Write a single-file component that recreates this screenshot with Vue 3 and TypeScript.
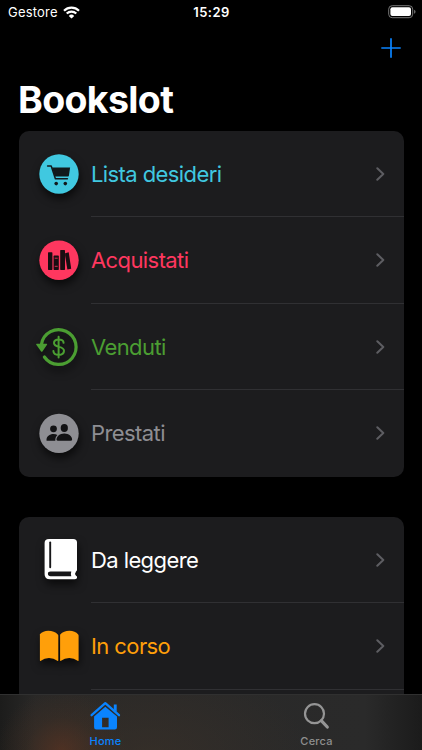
<script setup lang="ts">
interface Row {
  id: string
  label: string
  tone: string
  viewBox: string
}

const sections: Row[][] = [
  [
    { id: 'cart', label: 'Lista desideri', tone: 'cyan', viewBox: '0 -1 60 60' },
    { id: 'books', label: 'Acquistati', tone: 'pink', viewBox: '0 0 60 60' },
    { id: 'sold', label: 'Venduti', tone: 'green', viewBox: '0 -1 60 60' },
    { id: 'people', label: 'Prestati', tone: 'gray', viewBox: '0 -1 60 60' },
  ],
  [
    { id: 'book', label: 'Da leggere', tone: 'white', viewBox: '0 0 60 60' },
    { id: 'open', label: 'In corso', tone: 'orange', viewBox: '0 0 60 60' },
    { id: 'none', label: '', tone: 'white', viewBox: '0 0 60 60' },
  ],
]
</script>

<template>
  <div class="screen">
    <header class="status">
      <div class="carrier">
        <span class="carrier-name">Gestore</span>
        <svg class="wifi" viewBox="0 0 17 13">
          <path d="M1 4.7a10.8 10.8 0 0 1 15 0M3.7 7.5a7 7 0 0 1 9.6 0" fill="none" stroke="#fff" stroke-width="2.2" />
          <path d="M8.5 12.6 5.8 9.9a3.9 3.9 0 0 1 5.4 0z" fill="#fff" />
        </svg>
      </div>
      <span class="time">15:29</span>
      <svg class="battery" viewBox="0 0 28 14">
        <rect x=".7" y=".7" width="24" height="12" rx="3.5" fill="none" stroke="#777" />
        <rect x="2.4" y="2.3" width="20.6" height="8.8" rx="2" fill="#fff" />
        <path d="M26 4.8q1.6.6 1.6 2T26 8.8z" fill="#666" />
      </svg>
    </header>
    <div class="toolbar">
      <svg class="plus" viewBox="0 0 20 20"><path d="M10 .3v19.4M.3 10h19.4" stroke="#0a84ff" stroke-width="1.7" /></svg>
    </div>
    <h1 class="title">Bookslot</h1>
    <main class="content">
      <section v-for="(rows, s) in sections" :key="s" class="card">
        <div v-for="row in rows" :key="row.id" class="row" :class="row.tone">
          <svg class="icon" :viewBox="row.viewBox">
            <g v-if="row.id === 'cart'">
              <circle cx="29" cy="29" r="19.7" fill="currentColor" />
              <path d="M17.6 20.9h3.6l4.2 12.8h12" fill="none" stroke="#11191c" stroke-width="1.5" stroke-linecap="round" stroke-linejoin="round" />
              <path d="M22 22.6h18.1l-1.2 8.2q-.1.6-.8.6H24.8z" fill="#11191c" />
              <circle cx="26.2" cy="38.6" r="1.8" fill="#11191c" />
              <circle cx="35.3" cy="38.6" r="1.8" fill="#11191c" />
            </g>
            <g v-else-if="row.id === 'books'">
              <circle cx="29" cy="30.2" r="19.7" fill="currentColor" />
              <g fill="#180d11">
                <rect x="18" y="22.3" width="4.4" height="17.6" rx=".6" />
                <rect x="23.6" y="25.6" width="5.2" height="14.3" rx=".6" />
                <rect x="30.2" y="20" width="4.8" height="19.9" rx=".6" />
                <path d="m35.1 23.2 3.6-.9 2.5 16.5-3.8.7-2.3-14z" />
              </g>
              <path d="M24.7 28.2h3M24.7 36.3h3" stroke="currentColor" stroke-width=".8" />
            </g>
            <g v-else-if="row.id === 'sold'">
              <path d="M11.5 26.2a17.4 17.4 0 1 1 2.9 12.8" fill="none" stroke="currentColor" stroke-width="3.2" stroke-linecap="round" />
              <path d="M6.8 25.8h9.8q1 0 .4.9l-4.6 6.7q-.7.9-1.3 0l-4.8-6.7q-.6-.9.5-.9z" fill="currentColor" />
              <path d="M33.6 24.8q-.3-3.3-5-3.3-4.6 0-4.6 3.6c0 5.3 10 2.2 10 7.7 0 2.7-2.2 4.1-5.3 4.1q-5.1 0-5.3-3.9M28.6 18.8v20.7" fill="none" stroke="currentColor" stroke-width="2" stroke-linecap="round" />
            </g>
            <g v-else-if="row.id === 'people'">
              <circle cx="29" cy="29.4" r="19.7" fill="currentColor" />
              <g fill="#121214">
                <circle cx="23.5" cy="24.8" r="3.4" />
                <path d="M17 36.8q-.5 0-.5-.9c0-3.3 3-5.9 7-5.9q2.4 0 3.9 1c-1.6 1.5-2.1 3-2.1 5.8z" />
                <ellipse cx="34.3" cy="24" rx="3.6" ry="4.1" />
                <path d="M28 36.8q-1.5 0-1.5-1.2c0-3.2 3.4-6 7.8-6s7.8 2.8 7.8 6q0 1.2-1.5 1.2z" />
              </g>
            </g>
            <g v-else-if="row.id === 'book'">
              <path d="M19 9h24.2q3.8 0 3.8 3.6v27.2q0 1.2-1 1.8-1.7 2.2 0 4.1l1 .8q.6 2.8-2.4 2.8H20q-5.4 0-5.4-5V13q0-4 4.4-4z" fill="currentColor" />
              <path d="M20.2 12.4v24.9" stroke="#171719" stroke-width="1.9" stroke-linecap="round" />
              <path d="M20.6 41.5h20.7q-.8 2.2 0 4.7H20.6q-2.7 0-2.7-2.35t2.7-2.35z" fill="#171719" />
            </g>
            <g v-else-if="row.id === 'open'" fill="currentColor">
              <path d="M9.8 18.3q3.2-3.6 8.5-3.6 6 0 9.5 3.7.5.4.5 1.4v24.5q0 1.1-1 .5-3.5-2.8-8.3-2.8-4.7 0-8.1 2.8-1 .7-1-.5V19.7q0-.9-.1-1.4z" />
              <path d="M30.2 18.4q3.5-3.7 9.2-3.7t8.8 3.7q.4.5.4 1.3v24.6q0 1.1-1 .5-3.6-2.8-8.3-2.8-4.8 0-8.3 2.8-.9.6-.9-.5V19.7q0-.9.1-1.3z" />
            </g>
          </svg>
          <div class="row-body">
            <span class="label">{{ row.label }}</span>
            <svg v-if="row.label" class="chevron" viewBox="0 0 9 14"><path d="m1.3 1.2 6 5.8-6 5.8" fill="none" stroke="#5d5d62" stroke-width="2" stroke-linecap="round" stroke-linejoin="round" /></svg>
          </div>
        </div>
      </section>
    </main>
    <nav class="tabs">
      <div class="tab active">
        <svg class="tab-icon" viewBox="0 0 34 30">
          <path d="m2.6 14.2 13.7-12.1L30 14.2" fill="none" stroke="#0a84ff" stroke-width="2.3" stroke-linecap="round" stroke-linejoin="round" />
          <path d="M24.8 3.6h2.9v7.2l-2.9-2.4z" fill="#0a84ff" />
          <path d="M16.3 5.7 28 15.6v10.6q0 2.2-2.2 2.2H7.3q-2.2 0-2.2-2.2V15.6zM13.1 16.7v9.5h6.5v-9.5z" fill="#0a84ff" fill-rule="evenodd" />
        </svg>
        <span class="tab-label">Home</span>
      </div>
      <div class="tab">
        <svg class="tab-icon" viewBox="0 0 34 30">
          <circle cx="14.5" cy="12.7" r="9.5" fill="none" stroke="#959595" stroke-width="2.2" />
          <path d="m21.3 19.6 6 6.4" stroke="#959595" stroke-width="3.2" stroke-linecap="round" />
        </svg>
        <span class="tab-label">Cerca</span>
      </div>
    </nav>
  </div>
</template>

<style>
body { background: #000; overflow: hidden; }
</style>

<style scoped>
.screen {
  width: 422px;
  height: 750px;
  display: flex;
  flex-direction: column;
  overflow: hidden;
  background: #000;
  color: #fff;
  font-family: Inter, "Liberation Sans", sans-serif;
}
.status {
  flex: none;
  height: 24px;
  display: grid;
  grid-template-columns: 1fr auto 1fr;
  align-items: center;
  padding: 0 6px 0 8px;
}
.carrier { display: flex; align-items: center; gap: 5px; }
.carrier-name { font-size: 13px; line-height: 24px; letter-spacing: .2px; }
.wifi { width: 17px; height: 13px; }
.time { font-size: 13px; font-weight: 600; letter-spacing: .45px; margin-right: 1px; }
.battery { width: 28px; height: 14px; justify-self: end; }
.toolbar {
  flex: none;
  height: 48px;
  box-sizing: border-box;
  display: flex;
  justify-content: flex-end;
  padding: 14px 21px 0 0;
}
.plus { width: 20px; height: 20px; }
.title {
  flex: none;
  height: 58.5px;
  margin: 0;
  padding-left: 18px;
  font-size: 37.5px;
  line-height: 55px;
  font-weight: 700;
  letter-spacing: -.65px;
}
.content {
  flex: 1;
  min-height: 0;
  overflow: hidden;
  display: flex;
  flex-direction: column;
  gap: 40px;
  padding: 0 18.5px;
}
.card { flex: none; border-radius: 10px; background: #1c1c1e; overflow: hidden; }
.row { display: flex; align-items: center; height: 86.5px; padding-left: 11.5px; }
.icon { flex: none; width: 60px; height: 60px; overflow: visible; filter: drop-shadow(1px 5px 4px rgba(0, 0, 0, .65)); }
.row-body {
  flex: 1;
  align-self: stretch;
  box-sizing: border-box;
  display: flex;
  align-items: center;
  justify-content: space-between;
  padding: 1.4px 18.5px 0 0;
  margin-left: 1px;
  border-bottom: 1px solid #303033;
}
.row:last-child .row-body { border-bottom-color: transparent; }
.label { font-size: 22px; line-height: 28px; letter-spacing: -.59px; }
.chevron { width: 9px; height: 14px; }
.cyan { color: #40c8e0; }
.pink { color: #ff375f; }
.green { color: #4b9e32; }
.gray { color: #8e8e93; }
.white { color: #fff; }
.orange { color: #ff9f0a; }
.tabs {
  flex: none;
  height: 56px;
  box-sizing: border-box;
  display: flex;
  border-top: 1px solid #303030;
  background:
    radial-gradient(ellipse 65px 62px at 62px 56px, rgba(105, 54, 32, .55), rgba(80, 50, 32, .22) 55%, transparent),
    radial-gradient(ellipse 160px 90px at 150px 60px, rgba(65, 52, 40, .45), transparent),
    linear-gradient(90deg, #1c1c1b 0, #292827 35px, #2a2a2a 365px, #1b1b1b 422px);
}
.tab { flex: 1; display: flex; flex-direction: column; align-items: center; padding-top: 6px; color: #8f8f8f; }
.tab-icon { width: 34px; height: 30px; }
.tab-label { font-size: 11px; line-height: 14px; margin-top: 3px; font-weight: 500; letter-spacing: .2px; }
.active { color: #0a84ff; }
</style>
